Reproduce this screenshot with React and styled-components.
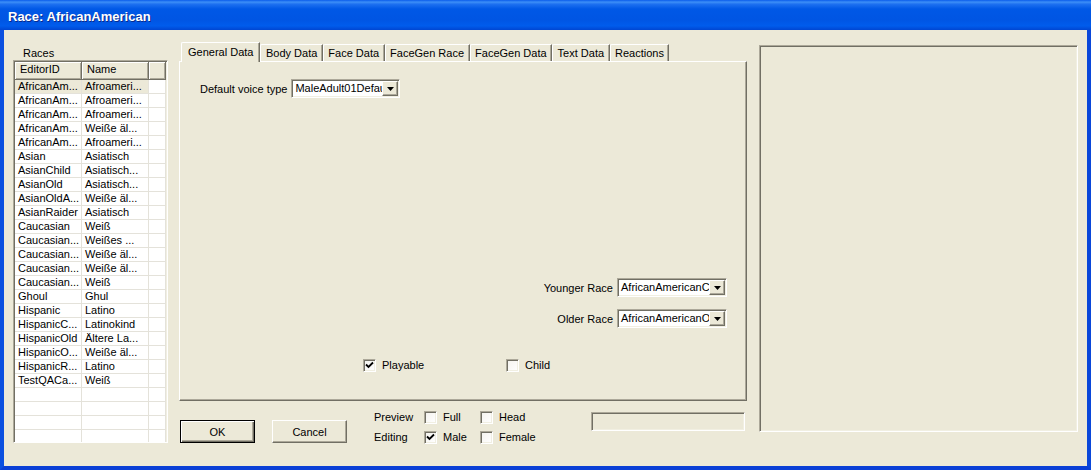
import React from 'react';
import styled, { createGlobalStyle, css } from 'styled-components';

const GlobalStyle = createGlobalStyle`
  html, body {
    margin: 0;
    padding: 0;
    background: #ECE9D8;
  }
  body {
    font-family: "Liberation Sans", Arial, sans-serif;
    font-size: 11px;
    color: #000;
  }
`;

const sunken = css`
  box-sizing: border-box;
  border: 1px solid;
  border-color: #ACA899 #fff #fff #ACA899;
  box-shadow: inset 1px 1px #716F64, inset -1px -1px #F1EFE2;
  padding: 1px;
`;

const raised = css`
  box-sizing: border-box;
  border: 1px solid;
  border-color: #fff #716F64 #716F64 #fff;
  box-shadow: inset -1px -1px #ACA899;
`;

const Window = styled.div`
  width: 1091px;
  height: 470px;
  display: flex;
  flex-direction: column;
  overflow: hidden;
`;

const TitleBar = styled.div`
  height: 30px;
  flex: none;
  box-sizing: border-box;
  display: flex;
  align-items: center;
  padding: 3px 0 0 8px;
  background: linear-gradient(180deg, #0A5CEB 0%, #3D8FF7 7%, #1D70F0 14%, #0058E6 30%, #0055E3 65%, #005CEC 86%, #0046D2 100%);
  color: #fff;
  font: bold 13px "Liberation Sans", Arial, sans-serif;
  text-shadow: 1px 1px #0A2A8C;
`;

const Body = styled.div`
  flex: 1;
  display: flex;
  align-items: flex-start;
  background: #ECE9D8;
  border: 4px solid #0B55E4;
  border-top: none;
  border-color: #0B50E0 #0A47DA #0A3FD6 #0B50E0;
`;

/* ---------- left list ---------- */

const LeftColumn = styled.div`
  margin: 16px 0 0 9px;
  width: 155px;
  display: flex;
  flex-direction: column;
`;

const GroupLabel = styled.div`
  height: 14px;
  line-height: 14px;
  padding-left: 10px;
`;

const ListBox = styled.div`
  ${sunken};
  height: 383px;
  background: #fff;
  overflow: hidden;
`;

const ListGrid = styled.div`
  display: grid;
  grid-template-columns: 67px 67px 1fr;
`;

const HeaderCell = styled.div`
  box-sizing: border-box;
  height: 18px;
  line-height: 15px;
  padding-left: 5px;
  background: #ECE9D8;
  border-right: 1px solid #716F64;
  border-bottom: 1px solid #716F64;
  box-shadow: inset 1px 1px #fff, inset -1px -1px #ACA899;
`;

const Cell = styled.div`
  box-sizing: border-box;
  height: 14px;
  line-height: 13px;
  padding-left: 3px;
  white-space: nowrap;
  overflow: hidden;
  border-right: 1px solid #E4E2DA;
  border-bottom: 1px solid #E4E2DA;
  background: ${p => (p.$selected ? '#ECE9D8' : '#fff')};
`;

/* ---------- middle ---------- */

const MiddleColumn = styled.div`
  margin: 12px 0 0 11px;
  width: 568px;
  display: flex;
  flex-direction: column;
`;

const TabStrip = styled.div`
  height: 19px;
  display: flex;
  align-items: flex-end;
  padding-left: 2px;
  position: relative;
  z-index: 1;
`;

const Tab = styled.div`
  box-sizing: border-box;
  height: ${p => (p.$active ? '20px' : '17px')};
  margin-bottom: ${p => (p.$active ? '-1px' : '0')};
  padding: ${p => (p.$active ? '2px 6px 0 6px' : '1px 4.5px 0 4.5px')};
  line-height: 14px;
  white-space: nowrap;
  background: #ECE9D8;
  border-top: 1px solid #fff;
  border-left: 1px solid #fff;
  border-right: 1px solid #716F64;
  border-top-left-radius: 2px;
  box-shadow: inset -1px 0 #ACA899;
`;

const Panel = styled.div`
  box-sizing: border-box;
  height: 340px;
  display: flex;
  flex-direction: column;
  padding: 17px 0 0 20px;
  border: 1px solid;
  border-color: #fff #716F64 #716F64 #fff;
  box-shadow: inset -1px -1px #ACA899;
`;

const FieldRow = styled.div`
  display: flex;
  align-items: center;
  gap: 4px;
  ${p => p.$right && css`
    align-self: flex-end;
    margin-right: 19px;
  `}
  margin-top: ${p => p.$top || 0}px;
`;

const Combo = styled.div`
  ${sunken};
  width: ${p => p.$w}px;
  height: 19px;
  display: flex;
  background: #fff;
`;

const ComboText = styled.span`
  flex: 1;
  overflow: hidden;
  white-space: nowrap;
  padding-left: 2px;
  line-height: 15px;
`;

const ComboButton = styled.span`
  ${raised};
  width: 16px;
  height: 15px;
  flex: none;
  background: #ECE9D8;
  display: flex;
  align-items: center;
  justify-content: center;
`;

const CheckRow = styled.div`
  display: flex;
  margin-top: 31px;
  padding-left: 163px;
`;

const CheckItem = styled.label`
  display: flex;
  align-items: center;
  gap: 6px;
  width: ${p => (p.$w ? `${p.$w}px` : 'auto')};
  height: 13px;
  line-height: 13px;
`;

const Box = styled.span`
  ${sunken};
  width: 13px;
  height: 13px;
  flex: none;
  background: linear-gradient(135deg, #f4f3ee, #fff);
  display: flex;
  align-items: center;
  justify-content: center;
  padding: 0;
`;

const BottomRow = styled.div`
  margin-top: 10px;
  height: 33px;
  display: flex;
  align-items: flex-start;
`;

const Button = styled.button`
  ${raised};
  width: 75px;
  height: 23px;
  margin: 9px 0 0 ${p => p.$left}px;
  padding: 0;
  font: 11px "Liberation Sans", Arial, sans-serif;
  color: #000;
  background: #ECE9D8;
  ${p => p.$default && css`
    border: 1px solid #000;
    box-shadow: inset 1px 1px #fff, inset -1px -1px #716F64, inset -2px -2px #ACA899;
  `}
`;

const Options = styled.div`
  margin-left: 27px;
  display: grid;
  grid-template-columns: 50px 56px auto;
  grid-auto-rows: 13px;
  row-gap: 7px;
  align-items: center;
`;

const OptionLabel = styled.span`
  line-height: 13px;
  margin-top: -1px;
`;

const StatusBox = styled.div`
  ${sunken};
  margin: 1px 2px 0 auto;
  width: 154px;
  height: 19px;
`;

/* ---------- right preview ---------- */

const PreviewPane = styled.div`
  ${sunken};
  margin: 15px 0 0 12px;
  width: 319px;
  height: 387px;
  background: #ECE9D8;
`;

const Arrow = () => (
  <svg width="7" height="4" viewBox="0 0 7 4">
    <path d="M0 0h7L3.5 4z" fill="#000" />
  </svg>
);

const Check = () => (
  <svg width="9" height="9" viewBox="0 0 9 9">
    <path d="M1 3.5l2.5 2.5L8 1.5" fill="none" stroke="#000" strokeWidth="1.8" />
  </svg>
);

const CheckBox = ({ checked, label, w }) => (
  <CheckItem $w={w}>
    <Box>{checked && <Check />}</Box>
    {label}
  </CheckItem>
);

const Dropdown = ({ value, w }) => (
  <Combo $w={w}>
    <ComboText>{value}</ComboText>
    <ComboButton><Arrow /></ComboButton>
  </Combo>
);

const races = [
  ['AfricanAm...', 'Afroameri...'],
  ['AfricanAm...', 'Afroameri...'],
  ['AfricanAm...', 'Afroameri...'],
  ['AfricanAm...', 'Weiße äl...'],
  ['AfricanAm...', 'Afroameri...'],
  ['Asian', 'Asiatisch'],
  ['AsianChild', 'Asiatisch...'],
  ['AsianOld', 'Asiatisch...'],
  ['AsianOldA...', 'Weiße äl...'],
  ['AsianRaider', 'Asiatisch'],
  ['Caucasian', 'Weiß'],
  ['Caucasian...', 'Weißes ...'],
  ['Caucasian...', 'Weiße äl...'],
  ['Caucasian...', 'Weiße äl...'],
  ['Caucasian...', 'Weiß'],
  ['Ghoul', 'Ghul'],
  ['Hispanic', 'Latino'],
  ['HispanicC...', 'Latinokind'],
  ['HispanicOld', 'Ältere La...'],
  ['HispanicO...', 'Weiße äl...'],
  ['HispanicR...', 'Latino'],
  ['TestQACa...', 'Weiß'],
  ['', ''],
  ['', ''],
  ['', ''],
  ['', ''],
];

const tabs = ['General Data', 'Body Data', 'Face Data', 'FaceGen Race', 'FaceGen Data', 'Text Data', 'Reactions'];

const App = () => (
  <>
    <GlobalStyle />
    <Window>
      <TitleBar>Race: AfricanAmerican</TitleBar>
      <Body>
        <LeftColumn>
          <GroupLabel>Races</GroupLabel>
          <ListBox>
            <ListGrid>
              <HeaderCell>EditorID</HeaderCell>
              <HeaderCell>Name</HeaderCell>
              <HeaderCell />
              {races.map(([id, name], i) => (
                <React.Fragment key={i}>
                  <Cell $selected={i === 0}>{id}</Cell>
                  <Cell $selected={i === 0}>{name}</Cell>
                  <Cell />
                </React.Fragment>
              ))}
            </ListGrid>
          </ListBox>
        </LeftColumn>

        <MiddleColumn>
          <TabStrip>
            {tabs.map((t, i) => (
              <Tab key={t} $active={i === 0}>{t}</Tab>
            ))}
          </TabStrip>
          <Panel>
            <FieldRow>
              Default voice type
              <Dropdown value="MaleAdult01Default" w={109} />
            </FieldRow>
            <FieldRow $right $top={180}>
              Younger Race
              <Dropdown value="AfricanAmericanChild" w={110} />
            </FieldRow>
            <FieldRow $right $top={12}>
              Older Race
              <Dropdown value="AfricanAmericanOld" w={110} />
            </FieldRow>
            <CheckRow>
              <CheckBox checked label="Playable" w={143} />
              <CheckBox label="Child" />
            </CheckRow>
          </Panel>
          <BottomRow>
            <Button $default $left={1}>OK</Button>
            <Button $left={17}>Cancel</Button>
            <Options>
              <OptionLabel>Preview</OptionLabel>
              <CheckBox label="Full" />
              <CheckBox label="Head" />
              <OptionLabel>Editing</OptionLabel>
              <CheckBox checked label="Male" />
              <CheckBox label="Female" />
            </Options>
            <StatusBox />
          </BottomRow>
        </MiddleColumn>

        <PreviewPane />
      </Body>
    </Window>
  </>
);

export default App;
